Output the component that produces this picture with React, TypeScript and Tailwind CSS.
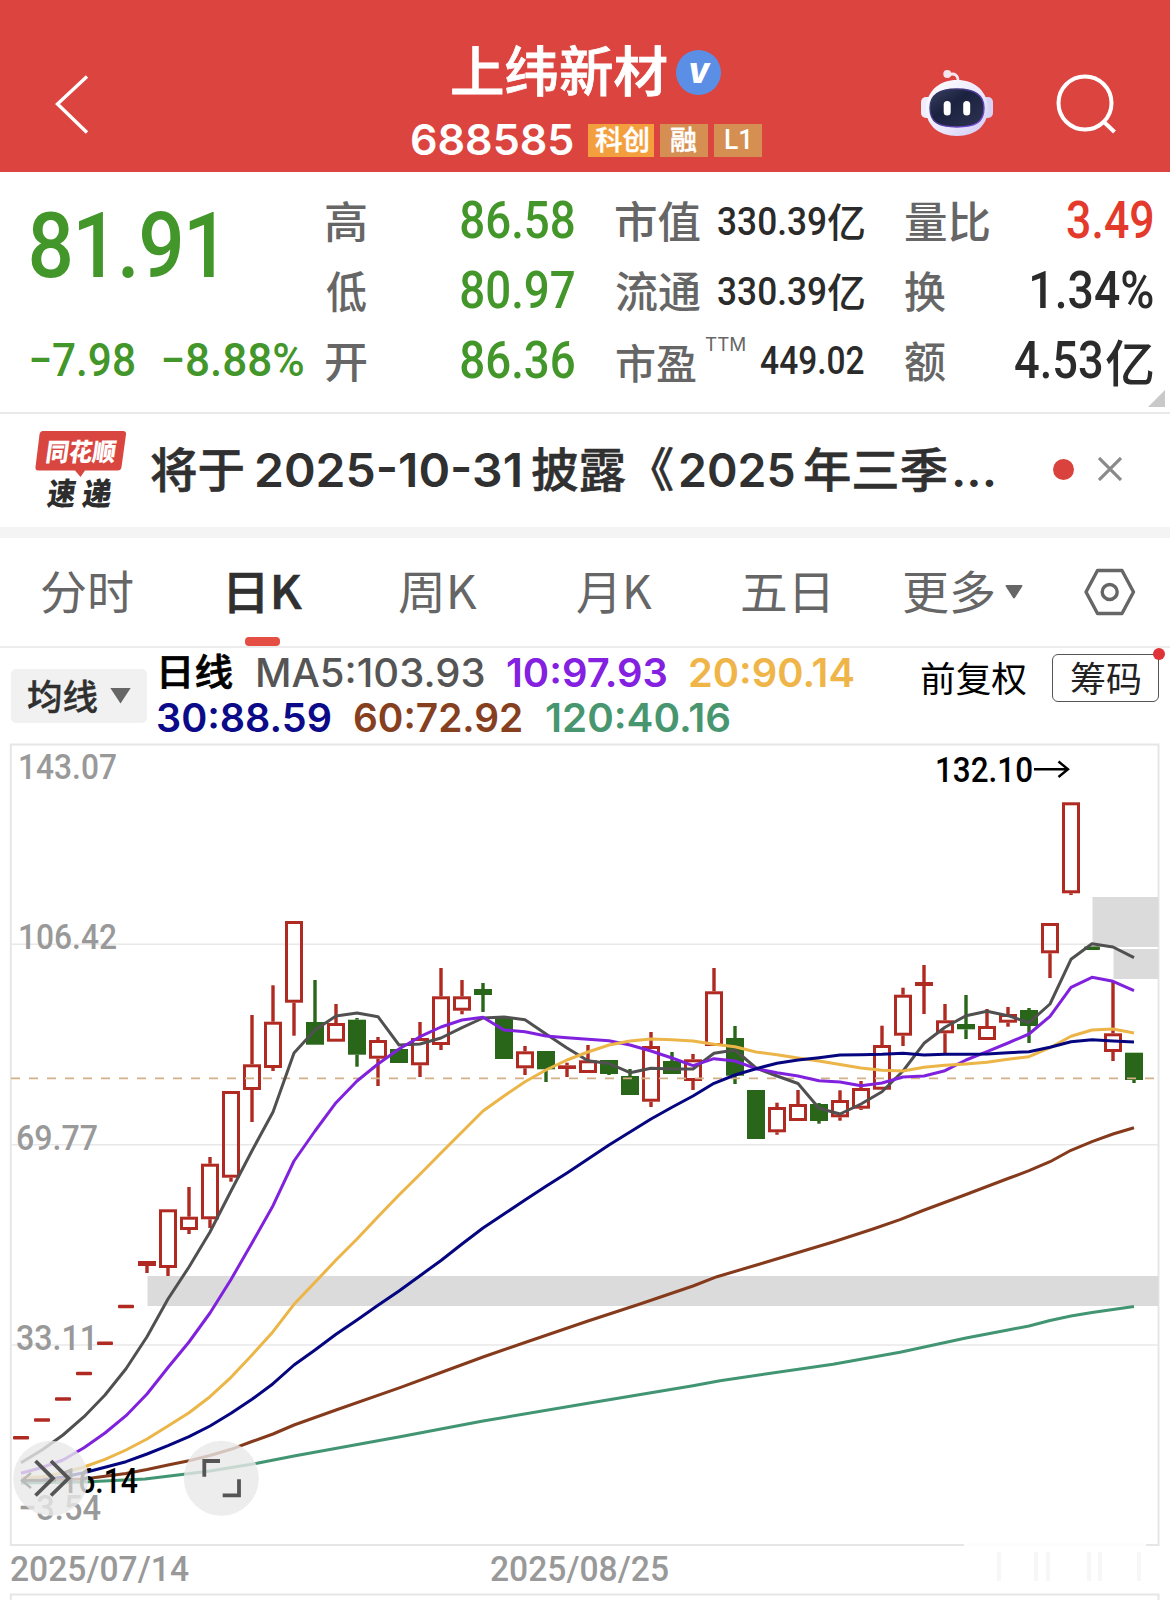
import React from 'react';
import clsx from 'clsx';

const CJK = "pb-[0.1em] [font-family:'Noto_Sans_CJK_SC',sans-serif]";
const DIN = '[font-family:Roboto,sans-serif]';
const INTER = '[font-family:Inter,sans-serif]';

// Text stretched horizontally so that its ink fills the width of the box
function Fit({ className, children }: { className: string; children: string }) {
  const ref = React.useRef<HTMLSpanElement>(null);
  const [transform, setTransform] = React.useState('none');

  React.useLayoutEffect(() => {
    const el = ref.current;
    const ctx = document.createElement('canvas').getContext('2d');
    if (!el || !el.parentElement || !ctx) return;
    const s = getComputedStyle(el);
    ctx.font = `${s.fontStyle} ${s.fontWeight} ${s.fontSize} ${s.fontFamily}`;
    const m = ctx.measureText(children);
    const k = el.parentElement.clientWidth / (m.actualBoundingBoxLeft + m.actualBoundingBoxRight);
    setTransform(`translateX(${m.actualBoundingBoxLeft * k}px) scaleX(${k})`);
  }, [children]);

  return (
    <div className={clsx('shrink-0 leading-none', className)}>
      <span ref={ref} className="inline-block origin-left whitespace-nowrap align-top" style={{ transform }}>
        {children}
      </span>
    </div>
  );
}

function RobotIcon() {
  return (
    <svg className="h-[70px] w-[76px]" viewBox="919 68 76 70">
      <defs>
        <linearGradient id="shell" x1="0" y1="0" x2="1" y2="1">
          <stop offset="0" stopColor="#ffffff" />
          <stop offset="0.6" stopColor="#e9e6fb" />
          <stop offset="1" stopColor="#cfc8f3" />
        </linearGradient>
        <linearGradient id="visor" x1="0" y1="0" x2="1" y2="1">
          <stop offset="0" stopColor="#3a4160" />
          <stop offset="0.4" stopColor="#1b2240" />
          <stop offset="1" stopColor="#2d3350" />
        </linearGradient>
        <linearGradient id="rim" x1="0" y1="0" x2="1" y2="1">
          <stop offset="0" stopColor="#2a3050" />
          <stop offset="1" stopColor="#7a4be8" />
        </linearGradient>
      </defs>
      <path d="M949 75c5-2.500 9.500 0 9 7" fill="none" stroke="#f3e6f0" strokeWidth="2.800" />
      <circle cx="947.300" cy="74" r="4" fill="#f6e6ee" />
      <rect x="921" y="97" width="14" height="21" rx="5" fill="#efedfb" />
      <rect x="979" y="97" width="14" height="21" rx="5" fill="#d8d2f5" />
      <path d="M957 80c17 0 29 10 31 26 1 19-12 30-31 30s-32-11-31-30c2-16 14-26 31-26Z" fill="url(#shell)" />
      <path d="M957 89c17 0 27 5 27 19s-8 19-27 19-27-5-27-19 10-19 27-19Z" fill="url(#visor)" stroke="url(#rim)" strokeWidth="1.400" />
      <rect x="943.700" y="101" width="7" height="14.500" rx="3.500" fill="#fff" />
      <rect x="963.200" y="101" width="7" height="14.500" rx="3.500" fill="#fff" />
    </svg>
  );
}

function Header() {
  return (
    <header className="flex h-[172px] bg-[#dc4440]">
      <svg className="mt-[74px] ml-[54px] h-[62px] w-[36px]" viewBox="54 74 36 62" fill="none" stroke="#fff" strokeWidth="3.400">
        <path d="M87 76.500 57.500 104 87 132.500" />
      </svg>

      <div className="ml-[322px] w-[350px]">
        <div className="mt-[44px] flex h-[56px] items-center pl-[40px]">
          <Fit className={clsx(CJK, 'w-[214px] text-[54px] font-medium text-white [-webkit-text-stroke:0.8px_white]')}>上纬新材</Fit>
          <div className="ml-[10px] flex size-[45px] items-center justify-center rounded-full bg-[#5b8fe6] pt-[2px]">
            <span className="[font-family:Inter,sans-serif] text-[27px] leading-none font-black text-white italic">V</span>
          </div>
        </div>
        <div className="mt-[23px] flex h-[34px] items-center">
          <Fit className={clsx(INTER, 'w-[161px] text-[42px] font-semibold text-white')}>688585</Fit>
          <div className="ml-[15px] flex h-[33px] w-[66px] items-center justify-center bg-[#f49f3e]">
            <Fit className={clsx(CJK, 'w-[53px] text-[27px] font-medium text-white [-webkit-text-stroke:0.4px_white]')}>科创</Fit>
          </div>
          <div className="ml-[6px] flex h-[33px] w-[48px] items-center justify-center bg-[#d68f52]">
            <Fit className={clsx(CJK, 'w-[26px] text-[27px] font-medium text-white [-webkit-text-stroke:0.4px_white]')}>融</Fit>
          </div>
          <div className="ml-[6px] flex h-[33px] w-[48px] items-center justify-center bg-[#d68f52] pr-[2px]">
            <Fit className={clsx(DIN, 'w-[24px] text-[27px] font-medium text-white')}>L1</Fit>
          </div>
        </div>
      </div>

      <div className="mt-[68px] ml-[157px]">
        <RobotIcon />
      </div>
      <svg className="mt-[70px] ml-[58px] h-[68px] w-[68px]" viewBox="1053 70 68 68" fill="none" stroke="#fff" strokeWidth="4">
        <circle cx="1085" cy="103" r="26.500" />
        <path d="m1103.500 121.500 11 10.500" />
      </svg>
    </header>
  );
}

const LABEL = clsx(CJK, 'text-[43px] font-medium text-[#666]');
const VALUE = clsx(DIN, 'pb-[3px] text-[51px] font-medium');
const GREEN = 'text-[#43962a]';
const DARK = 'text-[#2b2b2b]';

function Row({ children }: { children: React.ReactNode }) {
  return <div className="flex h-[70px] items-center justify-between">{children}</div>;
}

function Quote() {
  return (
    <section className="relative flex h-[242px] border-b-2 border-[#e9e9e9] pt-[15px] pl-[31px]">
      <div className="w-[295px]">
        <div className="flex h-[117px] items-center pt-[2px]">
          <Fit className={clsx(DIN, 'w-[190px] text-[91px] font-medium tracking-[-0.02em]', GREEN)}>81.91</Fit>
        </div>
        <div className="mt-[23px] flex h-[66px] items-center">
          <Fit className={clsx(DIN, 'w-[103px] text-[46px] font-medium', GREEN)}>−7.98</Fit>
          <Fit className={clsx(DIN, 'ml-[29px] w-[140px] text-[46px] font-medium', GREEN)}>−8.88%</Fit>
        </div>
      </div>

      <div className="w-[248px]">
        <Row>
          <Fit className={clsx(LABEL, 'w-[40px]')}>高</Fit>
          <Fit className={clsx(VALUE, GREEN, 'w-[113px]')}>86.58</Fit>
        </Row>
        <Row>
          <Fit className={clsx(LABEL, 'w-[40px]')}>低</Fit>
          <Fit className={clsx(VALUE, GREEN, 'w-[113px]')}>80.97</Fit>
        </Row>
        <Row>
          <Fit className={clsx(LABEL, 'w-[40px]')}>开</Fit>
          <Fit className={clsx(VALUE, GREEN, 'w-[113px]')}>86.36</Fit>
        </Row>
      </div>

      <div className="ml-[42px] w-[248px]">
        {['市值', '流通'].map(label => (
          <Row key={label}>
            <Fit className={clsx(LABEL, 'w-[84px]')}>{label}</Fit>
            <div className="flex items-center">
              <Fit className={clsx(DIN, DARK, 'w-[107px] text-[39px] font-medium')}>330.39</Fit>
              <Fit className={clsx(CJK, DARK, 'ml-[3px] w-[36px] text-[40px] font-medium')}>亿</Fit>
            </div>
          </Row>
        ))}
        <Row>
          <Fit className={clsx(CJK, 'w-[80px] pt-[4px] text-[41px] font-medium text-[#666]')}>市盈</Fit>
          <Fit className={clsx(INTER, 'mb-[35px] w-[40px] text-[18px] text-[#666]')}>TTM</Fit>
          <Fit className={clsx(DIN, DARK, 'mb-[2px] ml-[8px] w-[103px] text-[38px] font-medium')}>449.02</Fit>
        </Row>
      </div>

      <div className="ml-[41px] w-[248px]">
        <Row>
          <Fit className={clsx(LABEL, 'w-[84px]')}>量比</Fit>
          <Fit className={clsx(VALUE, 'w-[86px] text-[#e33a2c]')}>3.49</Fit>
        </Row>
        <Row>
          <Fit className={clsx(LABEL, 'w-[40px]')}>换</Fit>
          <Fit className={clsx(VALUE, DARK, 'w-[121px]')}>1.34%</Fit>
        </Row>
        <Row>
          <Fit className={clsx(LABEL, 'w-[40px]')}>额</Fit>
          <div className="flex items-center">
            <Fit className={clsx(VALUE, DARK, 'w-[87px]')}>4.53</Fit>
            <Fit className={clsx(CJK, DARK, 'ml-[4px] w-[47px] text-[50px] font-medium')}>亿</Fit>
          </div>
        </Row>
      </div>

      <div className="absolute right-[5px] bottom-[5px] size-[17px] bg-[#c9c9c9] [clip-path:polygon(100%_0,100%_100%,0_100%)]" />
    </section>
  );
}

const NEWS_CJK = clsx(CJK, 'text-[47px] font-medium text-[#303030] [-webkit-text-stroke:0.6px_#303030]');
const NEWS_NUM = clsx(INTER, 'text-[47px] font-semibold text-[#303030]');

function News() {
  return (
    <section className="flex h-[113px] items-center pb-[3px]">
      <div className="relative ml-[35px] h-[76px] w-[94px]">
        <svg className="absolute inset-0 h-[76px] w-[94px]" viewBox="0 0 94 76">
          <path d="M8 0H88q3.500 0 3 3.500L86.500 36q-.5 3.500-4 3.500H50L45.500 46 40 39.500H3.500q-3.500 0-3-3.500L4.500 3.500Q5 0 8 0Z" fill="#d9463f" />
        </svg>
        <div className="relative pt-[7px] pl-[12px]">
          <Fit className={clsx(CJK, 'w-[69px] -skew-x-[8deg] text-[25px] font-black text-white')}>同花顺</Fit>
        </div>
        <div className="relative flex pt-[10px] pl-[13px]">
          <Fit className={clsx(CJK, 'w-[28px] -skew-x-[8deg] text-[31px] font-black text-[#2d2d2d]')}>速</Fit>
          <Fit className={clsx(CJK, 'ml-[7px] w-[29px] -skew-x-[8deg] text-[31px] font-black text-[#2d2d2d]')}>递</Fit>
        </div>
      </div>

      <Fit className={clsx(NEWS_CJK, 'ml-[22px] w-[92px]')}>将于</Fit>
      <Fit className={clsx(NEWS_NUM, 'ml-[13px] w-[264px]')}>2025-10-31</Fit>
      <Fit className={clsx(NEWS_CJK, 'ml-[12px] w-[93px]')}>披露</Fit>
      <Fit className={clsx(NEWS_CJK, 'ml-[26px] w-[22px]')}>《</Fit>
      <Fit className={clsx(NEWS_NUM, 'ml-[7px] w-[114px]')}>2025</Fit>
      <Fit className={clsx(NEWS_CJK, 'ml-[11px] w-[142px]')}>年三季</Fit>
      <Fit className={clsx(NEWS_NUM, 'ml-[7px] w-[40px]')}>...</Fit>

      <div className="ml-[59px] size-[21px] rounded-full bg-[#d9423d]" />
      <svg className="ml-[24px] size-[24px]" viewBox="0 0 24 24" stroke="#8a8a8a" strokeWidth="3.200">
        <path d="M1 1 23 23M23 1 1 23" />
      </svg>
    </section>
  );
}

const TAB = clsx(CJK, 'text-[46px] text-[#666]');

function Tabs() {
  return (
    <nav className="relative flex h-[110px] items-center border-b-2 border-[#ececec] pb-[1px]">
      <Fit className={clsx(TAB, 'ml-[42px] w-[91px]')}>分时</Fit>
      <Fit className={clsx(CJK, 'ml-[96px] w-[73px] text-[46px] font-medium text-[#303030] [-webkit-text-stroke:0.7px_#303030]')}>日K</Fit>
      <Fit className={clsx(TAB, 'ml-[97px] w-[78px]')}>周K</Fit>
      <Fit className={clsx(TAB, 'ml-[100px] w-[75px]')}>月K</Fit>
      <Fit className={clsx(TAB, 'ml-[90px] w-[86px]')}>五日</Fit>
      <Fit className={clsx(TAB, 'ml-[76px] w-[90px]')}>更多</Fit>
      <svg className="mt-[1px] ml-[11px] h-[14px] w-[18px]" viewBox="0 0 18 14">
        <path d="M1.500 0h15q1.500 0 .7 1.500L10 12.800q-1 1.200-2 0L.8 1.500Q0 0 1.500 0Z" fill="#666" />
      </svg>
      <svg className="ml-[60px] h-[48px] w-[54px]" viewBox="0 0 54 48" fill="none" stroke="#666" strokeWidth="3.400" strokeLinejoin="round">
        <path d="M14.500 2.500h24.500L50.500 24 39 45.500H14.500L3 24Z" />
        <circle cx="26.700" cy="24" r="7.500" />
      </svg>
      <div className="absolute bottom-0 left-[245px] h-[9px] w-[35px] rounded-[4px] bg-[#e54e43]" />
    </nav>
  );
}

const MA = clsx(INTER, 'text-[39px]');

function Averages() {
  return (
    <section className="flex h-[95px] bg-white">
      <div className="mt-[21px] ml-[11px] flex h-[54px] w-[136px] items-center rounded-[5px] bg-[#f1f1f1]">
        <Fit className={clsx(CJK, 'ml-[17px] w-[69px] text-[35px] font-medium text-[#303030] [-webkit-text-stroke:0.4px_#303030]')}>均线</Fit>
        <div className="mt-[-1px] ml-[13px] h-[16px] w-[21px] bg-[#666] [clip-path:polygon(0_0,100%_0,50%_100%)]" />
      </div>

      <div className="ml-[11px]">
        <div className="mt-[2px] flex h-[45px] items-center">
          <Fit className={clsx(CJK, 'ml-[4px] w-[70px] text-[37px] font-medium text-black [-webkit-text-stroke:0.7px_black]')}>日线</Fit>
          <Fit className={clsx(MA, 'ml-[26px] w-[226px] font-medium text-[#555]')}>MA5:103.93</Fit>
          <Fit className={clsx(MA, 'ml-[23px] w-[159px] font-semibold text-[#8420e0]')}>10:97.93</Fit>
          <Fit className={clsx(MA, 'ml-[24px] w-[164px] font-semibold text-[#efb549]')}>20:90.14</Fit>
        </div>
        <div className="flex h-[45px] items-center">
          <Fit className={clsx(MA, 'w-[172px] font-semibold text-[#0b0a88]')}>30:88.59</Fit>
          <Fit className={clsx(MA, 'ml-[24px] w-[167px] font-semibold text-[#86401f]')}>60:72.92</Fit>
          <Fit className={clsx(MA, 'ml-[25px] w-[183px] font-semibold text-[#48966f]')}>120:40.16</Fit>
        </div>
      </div>

      <div className="ml-auto flex pr-[11px]">
        <Fit className={clsx(CJK, 'mt-[11px] w-[105px] text-[35px] text-black')}>前复权</Fit>
        <div className="relative mt-[6px] ml-[26px] flex h-[48px] w-[107px] items-center justify-center rounded-[6px] border-[1.500px] border-[#555]">
          <Fit className={clsx(CJK, 'w-[69px] text-[35px] text-[#222]')}>筹码</Fit>
          <div className="absolute -top-[7px] -right-[7px] size-[12px] rounded-full bg-[#e03338]" />
        </div>
      </div>
    </section>
  );
}

// [kind, high, body top, body bottom, low]
type Candle = ['up' | 'down' | 'flatUp' | 'flatDown', number, number, number, number];

const CANDLES: Candle[] = [
  ['flatUp', 1437.7, 1437.7, 1437.7, 1437.7],
  ['flatUp', 1420, 1420, 1420, 1420],
  ['flatUp', 1399, 1399, 1399, 1399],
  ['flatUp', 1373.5, 1373.5, 1373.5, 1373.5],
  ['flatUp', 1343.3, 1343.3, 1343.3, 1343.3],
  ['flatUp', 1306.5, 1306.5, 1306.5, 1306.5],
  ['up', 1261, 1261, 1266, 1273],
  ['up', 1209.3, 1209.3, 1268, 1276],
  ['up', 1187, 1216.7, 1230, 1234],
  ['up', 1157, 1163.7, 1219.3, 1228],
  ['up', 1091, 1091, 1177.7, 1181.7],
  ['up', 1015, 1064.3, 1090, 1122],
  ['up', 985.3, 1021.7, 1068, 1071],
  ['up', 921, 921, 1002.7, 1035.7],
  ['down', 980, 1022, 1044.7, 1044.7],
  ['up', 1004, 1023, 1041.7, 1041.7],
  ['down', 1018, 1019.7, 1054.7, 1066.7],
  ['up', 1037, 1040, 1058.7, 1086],
  ['down', 1049, 1049, 1063, 1063],
  ['up', 1022, 1038, 1065.3, 1077],
  ['up', 968, 996.3, 1045, 1050],
  ['up', 980, 996.3, 1010.7, 1014.3],
  ['down', 983, 989, 995, 1012],
  ['down', 1017.3, 1017.3, 1059, 1059],
  ['up', 1046, 1051.3, 1068.3, 1075],
  ['down', 1051, 1051, 1069.3, 1082],
  ['up', 1062.7, 1065.3, 1069, 1077],
  ['up', 1045, 1060.3, 1073, 1073],
  ['down', 1060, 1060, 1074, 1075],
  ['down', 1069, 1076, 1095, 1095],
  ['up', 1032, 1046, 1101.7, 1107],
  ['down', 1052, 1061, 1074, 1074],
  ['up', 1054, 1059.3, 1081, 1090],
  ['up', 968, 991.3, 1046, 1046],
  ['down', 1026, 1038, 1075.7, 1084],
  ['down', 1090, 1090, 1139, 1139],
  ['up', 1102.7, 1107, 1132.3, 1134.7],
  ['up', 1090, 1104, 1121, 1121],
  ['down', 1103, 1104, 1121, 1123.7],
  ['up', 1090.3, 1100, 1117.3, 1120.7],
  ['up', 1081, 1088, 1108.7, 1110],
  ['up', 1025.7, 1045, 1089.7, 1089.7],
  ['up', 987.7, 994.7, 1035.7, 1046],
  ['up', 965, 982, 986, 1014],
  ['up', 1004, 1020.3, 1033.3, 1053],
  ['down', 995, 1024, 1029.3, 1039],
  ['up', 1009, 1026, 1040, 1040],
  ['up', 1007, 1014, 1022.7, 1026.7],
  ['down', 1008, 1010, 1026, 1043],
  ['up', 923, 923, 953.3, 978],
  ['up', 802.3, 802.3, 893.3, 895],
  ['flatDown', 948.3, 948.3, 948.3, 948.3],
  ['up', 981, 1033.3, 1052, 1061],
  ['down', 1052.7, 1052.7, 1080, 1083]
];

// One value per candle
const MA5 = [1462.7, 1450, 1435, 1416.7, 1395, 1368.7, 1336.7, 1299, 1267, 1232, 1191, 1150.7, 1112, 1053, 1030, 1016, 1013, 1016.7, 1045, 1044, 1038, 1027.7, 1018, 1017, 1019.7, 1034, 1048, 1060.7, 1063.5, 1072.7, 1068.3, 1069, 1069, 1053.3, 1050, 1068, 1076, 1083.5, 1108.3, 1114, 1104, 1091.7, 1071, 1043.3, 1027.3, 1015.7, 1011.3, 1015.7, 1022.7, 1004, 959.3, 943.7, 947, 957.7];
const MA10 = [1473.3, 1467.5, 1460, 1447.7, 1433, 1415.7, 1394, 1367.5, 1342, 1313, 1279.5, 1243, 1205.7, 1161, 1131, 1102.7, 1081, 1064, 1049, 1036.7, 1027, 1020, 1017.3, 1030, 1031.7, 1036, 1037.7, 1039.3, 1040.7, 1045, 1051, 1058, 1065.7, 1058.7, 1061, 1068.7, 1072.7, 1076, 1080.7, 1082, 1085.7, 1083, 1077, 1076, 1070.7, 1060, 1051.7, 1043, 1034, 1016.3, 987.3, 977.3, 981.3, 990.7];
const MA20 = [1478, 1476.7, 1473, 1467, 1459.3, 1450, 1439, 1426, 1412.7, 1396.7, 1377.3, 1355, 1331.7, 1304.3, 1282.3, 1260, 1239, 1216.7, 1195, 1174.3, 1153, 1132, 1111, 1096, 1081.7, 1070, 1060, 1052, 1045, 1041, 1039, 1039.7, 1041, 1044.3, 1046.7, 1052, 1054.7, 1058, 1061, 1064.5, 1068, 1070.3, 1071, 1067.3, 1065.3, 1064, 1062.3, 1059.3, 1056.7, 1047.7, 1036.3, 1030, 1029, 1033];
const MA30 = [1480.7, 1480, 1477, 1472.7, 1467.3, 1461.7, 1454, 1445.7, 1436.7, 1426, 1413.3, 1399.3, 1383.7, 1365, 1350, 1334.3, 1320, 1305.3, 1291, 1275.7, 1260.5, 1244, 1228, 1214, 1200, 1186.3, 1173, 1159, 1145, 1132, 1119, 1107.3, 1096, 1083.3, 1075, 1068.7, 1063.3, 1060, 1057.7, 1055, 1054.7, 1054.3, 1053.3, 1055, 1054.3, 1054.3, 1054, 1052.7, 1051.7, 1047.3, 1041.7, 1039.7, 1041, 1042];

const MA60 = '21,1481 84,1479 126,1473.500 147,1469.500 168,1465 189,1460.700 210,1455.500 231,1449.300 252,1441.500 273,1434 294,1425 336,1410 400,1387.700 441,1372.500 483,1357 525,1342.500 588,1321 640,1304 693,1286 717,1276.700 760,1264 833,1242 873,1229 900,1219.700 923,1210.500 966,1194.500 1008,1178.500 1029,1170.700 1050,1161.700 1071,1150.300 1092,1141.700 1113,1134 1134,1127.700';
const MA120 = '21,1483 84,1482 145,1479 184,1474.300 210,1471 257,1463.300 294,1456 400,1436.700 483,1421 588,1403.300 693,1385.700 720,1380.700 833,1364.300 900,1352.300 966,1338 1008,1330 1029,1326 1050,1320.500 1071,1316 1092,1312.500 1113,1309.500 1134,1306.500';

const xAt = (i: number) => 21 + i * 21;
const toPoints = (ys: number[]) => ys.map((y, i) => `${xAt(i)},${y}`).join(' ');

const UP = '#b02a22';
const DOWN = '#2a6619';

function CandleShape({ candle, x }: { candle: Candle; x: number }) {
  const [kind, high, top, bottom, low] = candle;
  if (kind === 'flatUp' || kind === 'flatDown') {
    return <rect x={x - 8} y={top - 1.7} width={16} height={3.4} rx={1} fill={kind === 'flatUp' ? UP : DOWN} />;
  }
  const color = kind === 'up' ? UP : DOWN;
  const hollow = kind === 'up' && bottom - top > 6;
  return (
    <g>
      {high < top && <rect x={x - 1.7} y={high} width={3.4} height={top - high} fill={color} />}
      {low > bottom && <rect x={x - 1.7} y={bottom} width={3.4} height={low - bottom} fill={color} />}
      {hollow ? (
        <rect x={x - 7.5} y={top + 1.5} width={15} height={bottom - top - 3} fill="none" stroke={color} strokeWidth={3} />
      ) : (
        <rect x={x - 9} y={top} width={18} height={bottom - top} fill={color} />
      )}
    </g>
  );
}

const AXIS = [
  { label: '143.07', x: 18, y: 779, width: 99 },
  { label: '106.42', x: 18, y: 949, width: 99 },
  { label: '69.77', x: 16, y: 1150, width: 82 },
  { label: '33.11', x: 16, y: 1350, width: 82 },
  { label: '−3.54', x: 18, y: 1520, width: 83 }
];

const DATES = [
  { label: '2025/07/14', x: 10, width: 179 },
  { label: '2025/08/25', x: 490, width: 179 }
];

function KLineChart() {
  return (
    <svg className="block h-[857px] w-[1170px]" viewBox="0 743 1170 857">
      {/* frame and gridlines */}
      <rect x="10.800" y="744.500" width="1147.700" height="800.500" fill="none" stroke="#e6e6e6" strokeWidth="2" />
      {[944.3, 1144.7, 1345].map(y => (
        <path key={y} d={`M12 ${y}H1158`} stroke="#e8e8e8" strokeWidth="1.500" />
      ))}

      {/* price gaps */}
      <rect x="147.500" y="1276" width="1011" height="30" fill="#dbdbdb" />
      <rect x="1092.500" y="897" width="66" height="50" fill="#dbdbdb" />
      <rect x="1113.500" y="949" width="45" height="30" fill="#dbdbdb" />

      <g className="[font-family:Roboto,sans-serif] text-[35.500px] font-medium" fill="#999">
        {AXIS.map(a => (
          <text key={a.label} x={a.x} y={a.y} textLength={a.width} lengthAdjust="spacingAndGlyphs">
            {a.label}
          </text>
        ))}
        {DATES.map(d => (
          <text key={d.label} x={d.x} y={1580.5} textLength={d.width} lengthAdjust="spacingAndGlyphs">
            {d.label}
          </text>
        ))}
      </g>

      {CANDLES.map((c, i) => (
        <CandleShape key={i} candle={c} x={xAt(i)} />
      ))}

      <path d="M11 1078.400H1158" stroke="#d3b087" strokeWidth="1.600" strokeDasharray="9 9" />

      <g fill="none" strokeWidth="3" strokeLinejoin="round">
        <polyline points={toPoints(MA5)} stroke="#505050" />
        <polyline points={toPoints(MA10)} stroke="#8022dd" />
        <polyline points={toPoints(MA20)} stroke="#ebb548" />
        <polyline points={toPoints(MA30)} stroke="#05057f" />
        <polyline points={MA60} stroke="#863a1c" />
        <polyline points={MA120} stroke="#429572" />
      </g>

      {/* highest and lowest price marks */}
      <g className="[font-family:Roboto,sans-serif] text-[35.500px] font-medium" fill="#000">
        <text x="935" y="782" textLength="98" lengthAdjust="spacingAndGlyphs">132.10</text>
        <text x="61" y="1493" textLength="77" lengthAdjust="spacingAndGlyphs">16.14</text>
      </g>
      <path d="M1034 769.200H1068M1058.500 761.500 1068 769.200 1058.500 777" fill="none" stroke="#000" strokeWidth="2.400" />
      <path d="M56 1480.500H22M31 1473 22 1480.500 31 1488" fill="none" stroke="#000" strokeWidth="2.400" />

      {/* floating buttons */}
      <circle cx="50.700" cy="1478.300" r="37.500" fill="#e8e8e8" fillOpacity="0.8" />
      <circle cx="221.300" cy="1478.300" r="37.500" fill="#e8e8e8" fillOpacity="0.8" />
      <g fill="none" stroke="#555" strokeWidth="3.800">
        <path d="M35.500 1461 53 1478.300 35.500 1495.500M51 1461 68.500 1478.300 51 1495.500" />
        <path d="M204.300 1476.700V1461H220M239 1479.300V1495.300H222.700" />
      </g>

      {/* worn corner of the frame */}
      <rect x="964" y="1543" width="182" height="4" fill="#fdfdfd" />
      <g fill="#f7f7f7">
        {[997, 1034, 1046, 1087, 1098, 1137].map(x => (
          <rect key={x} x={x} y="1552" width="4" height="29" />
        ))}
      </g>

      <path d="M10.800 1600V1594.500H1158.500V1600" fill="none" stroke="#e6e6e6" strokeWidth="2" />
    </svg>
  );
}

export default function App() {
  return (
    <div className="h-[1600px] w-[1170px] overflow-hidden bg-white">
      <Header />
      <Quote />
      <News />
      <div className="h-[11px] bg-[#f4f4f4]" />
      <Tabs />
      <Averages />
      <KLineChart />
    </div>
  );
}
